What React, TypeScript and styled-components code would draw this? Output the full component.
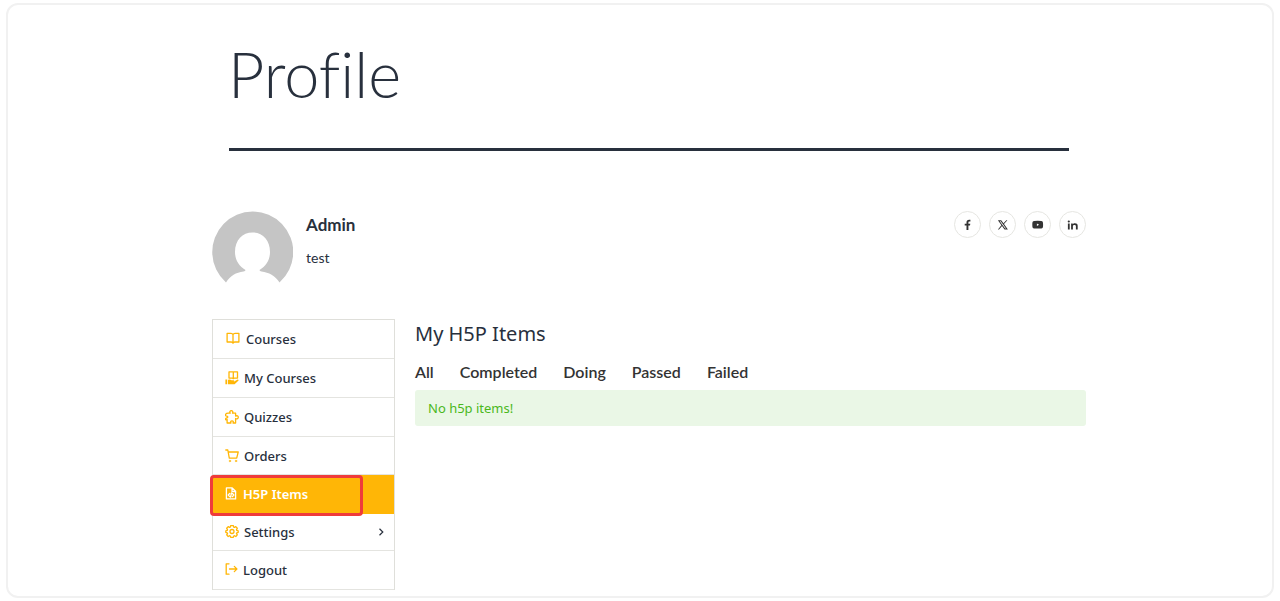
import React from "react";
import styled, { createGlobalStyle } from "styled-components";

const GlobalStyle = createGlobalStyle`
  *, *::before, *::after { box-sizing: border-box; }
  body {
    margin: 0;
    background: #fff;
    color: #28303d;
    font-family: "Noto Sans", "Open Sans", sans-serif;
  }
  h1, h2, h3, p, ul { margin: 0; padding: 0; }
  ul { list-style: none; }
  a { color: inherit; text-decoration: none; }
  button { font: inherit; color: inherit; background: none; border: 0; padding: 0; cursor: pointer; }
`;

const Frame = styled.div`
  margin: 3px 6px;
  min-height: calc(100vh - 6px);
  border: 2px solid #f1f1f1;
  border-radius: 12px;
  padding: 0 20px 6px 38px;
`;

const Container = styled.main`
  max-width: 874px;
  margin: 0 auto;
`;

const PageHeader = styled.header`
  margin: 0 17px;
  padding: 25px 0 31px;
  border-bottom: 3px solid #28303d;
`;

const PageTitle = styled.h1`
  margin-left: -1px;
  font-family: Lato, "Open Sans", sans-serif;
  font-size: 63px;
  line-height: 87px;
  font-weight: 300;
  font-variant-ligatures: none;
`;

const UserBar = styled.section`
  display: flex;
  align-items: flex-start;
  padding-top: 60px;
  height: 168px;
`;

const Avatar = styled.svg`
  width: 81px;
  height: 81px;
  flex: none;
`;

const UserInfo = styled.div`
  flex: 1;
  margin-left: 13px;
`;

const UserName = styled.h2`
  font-family: Lato, sans-serif;
  font-size: 17px;
  line-height: 28px;
  font-weight: 700;
`;

const UserBio = styled.p`
  margin-top: 8px;
  font-family: Lato, sans-serif;
  font-size: 14px;
  line-height: 22px;
`;

const Socials = styled.nav`
  display: flex;
  gap: 8px;
`;

const SocialLink = styled.a`
  display: flex;
  align-items: center;
  justify-content: center;
  width: 27px;
  height: 27px;
  border: 1px solid #e6e6e2;
  border-radius: 50%;
`;

const Columns = styled.div`
  display: flex;
  align-items: flex-start;
  gap: 20px;
`;

const Sidebar = styled.nav`
  flex: none;
  width: 183px;
  border: 1px solid #dfdfda;
  border-bottom: 0;
`;

const MenuRow = styled.li<{ $active?: boolean; $height?: number }>`
  position: relative;
  height: ${(p) => p.$height ?? 39}px;
  border-bottom: 1px solid ${(p) => (p.$active ? "#ffb606" : "#e4e4e0")};
  background: ${(p) => (p.$active ? "#ffb606" : "transparent")};
  color: ${(p) => (p.$active ? "#fff" : "#28303d")};
`;

const MenuLink = styled.a<{ $active?: boolean }>`
  display: flex;
  align-items: center;
  gap: 5px;
  height: 100%;
  padding: 0 9px 0 12px;
  font-size: 13px;
  font-weight: ${(p) => (p.$active ? 600 : 500)};

  & > svg { flex: none; color: ${(p) => (p.$active ? "#fff" : "#ffb606")}; }
  & > svg:last-child:not(:first-child) { margin-left: auto; color: #28303d; }
`;

const Highlight = styled.span`
  position: absolute;
  inset: 0 31px -3px -3px;
  border: 3px solid #ef3b3b;
  border-radius: 4px;
  pointer-events: none;
  z-index: 1;
`;

const Content = styled.section`
  flex: 1;
  min-width: 0;
`;

const ContentTitle = styled.h2`
  font-size: 20px;
  line-height: 30px;
  font-weight: 400;
`;

const Tabs = styled.div`
  display: flex;
  gap: 26px;
  margin-top: 11px;
  color: #333;
`;

const Tab = styled.button`
  && {
    font-family: Lato, "Noto Sans", sans-serif;
    font-size: 16px;
    line-height: 24px;
    font-weight: 600;
  }
`;

const Notice = styled.p`
  margin-top: 6px;
  padding: 8px 13px;
  border-radius: 3px;
  background: #eaf7e6;
  color: #4ab81c;
  font-size: 13px;
  line-height: 20px;
`;

type IconProps = { width?: number; children: React.ReactNode };

const LineIcon = ({ width = 14, children }: IconProps) => (
  <svg width={width} height="14" viewBox={`0 0 ${width} 14`} fill="none" stroke="currentColor" strokeWidth="1.3" strokeLinecap="round" strokeLinejoin="round" aria-hidden="true">
    {children}
  </svg>
);

const BookIcon = () => (
  <LineIcon width={16}>
    <path d="M8 2.500Q7.500 1.300 6 1.300H2.100v8.700h4.200q1.200 0 1.700 1.200.5-1.200 1.700-1.200h4.200V1.300H10Q8.500 1.300 8 2.500zV10.600" />
  </LineIcon>
);

const HandBookIcon = () => (
  <LineIcon>
    <path d="M4 .8h3.700l.6.5.6-.5h3.600v6.300H9l-.7.5-.7-.5H4zM8.300 1.300v6.200" />
    <path d="M.4 8.500h1.800v4.800H.4zM3 9.100c1.400-.9 2.500-.5 3.400.2h2.200c.9 0 .8 1.200 0 1.200H6.400h2.800l3-1.800c1-.5 1.900.5 1.100 1.100l-3.700 3.500H3z" fill="currentColor" stroke="none" />
  </LineIcon>
);

const PuzzleIcon = () => (
  <LineIcon>
    <path d="M3.100 3.200h2.100C4.300 1.900 5 .7 6.300.7s2 1.200 1.200 2.500h3.100v2.900c1.400-.8 2.700-.1 2.700 1.200s-1.300 2-2.700 1.200v4.500H8c.7-1.300.1-2.200-1-2.200s-1.700.9-1 2.200H2.100V9.500c-1.200.7-1.800.1-1.500-.7C1 7.600 2.800 8 2.800 6.900S1.200 6.300.7 5.600C.2 4.800.6 3.200 3.100 3.200z" />
  </LineIcon>
);

const CartIcon = () => (
  <LineIcon>
    <path d="M.8 1h2l1.500 8.100h7.400L13.200 3H3.200" />
    <circle cx="4.900" cy="12" r=".8" fill="currentColor" strokeWidth=".5" />
    <circle cx="11" cy="12" r=".8" fill="currentColor" strokeWidth=".5" />
  </LineIcon>
);

const FileCodeIcon = () => (
  <LineIcon width={13}>
    <path d="M1.400 .9h5.800l3.400 3.300v7.700H1.400zM7 1v3.500h3.500" />
    <path d="M4.700 6.500 3.200 8l1.500 1.500M7.400 6.500 8.900 8 7.400 9.500M6.500 5.900l-.9 4.200" />
  </LineIcon>
);

const GearIcon = () => (
  <LineIcon>
    <g transform="translate(0 -.5)">
      <path d="M5.700 1.100h2.600l.4 1.500.8.300 1.300-.8 1.500 1.700-.8 1.300.3.800 1.400.4v1.500l-1.400.5-.3.800.8 1.300-1.500 1.600-1.300-.8-.8.300-.4 1.400H5.700l-.4-1.400-.8-.3-1.300.8-1.500-1.600.8-1.300-.3-.8-1.400-.5V6.300l1.400-.4.300-.8-.8-1.300 1.500-1.700 1.300.8.8-.3z" />
      <circle cx="7" cy="7" r="2" />
    </g>
  </LineIcon>
);

const LogoutIcon = () => (
  <LineIcon width={13}>
    <path d="M4 .8H1.200v10.400H4M4.500 6h7.300M9.300 3.400 11.900 6 9.300 8.600" />
  </LineIcon>
);

const Chevron = () => (
  <svg width="7" height="8" viewBox="0 0 7 8" fill="none" stroke="currentColor" strokeWidth="1.2" aria-hidden="true">
    <path d="M1.500 .8 4.800 4 1.500 7.200" />
  </svg>
);

const menu = [
  { label: "Courses", icon: <BookIcon /> },
  { label: "My Courses", icon: <HandBookIcon /> },
  { label: "Quizzes", icon: <PuzzleIcon /> },
  { label: "Orders", icon: <CartIcon />, height: 38 },
  { label: "H5P Items", icon: <FileCodeIcon />, active: true },
  { label: "Settings", icon: <GearIcon />, submenu: true, height: 37 },
  { label: "Logout", icon: <LogoutIcon /> },
];

const socials = [
  { name: "Facebook", shape: <path d="M4.500 11V6.500H2.700V4.700h1.800V3.500C4.500 1.700 5.500.8 7.100.8h1.300v1.700h-1c-.7 0-1 .3-1 1v1.200h1.900L8 6.500H6.400V11z" /> },
  { name: "X", shape: <path fillRule="evenodd" d="M.9 1.200h3.300l2.300 3 2.800-3h1.100L7 5l3.900 5.500H7.500L5 7.100l-3 3.400H.9L4.400 6.300zM2.700 2.200l5.400 7.300h.9L3.700 2.200z" /> },
  { name: "YouTube", shape: <path fillRule="evenodd" d="M2.200 2Q5.700 1.700 9.200 2c1.500.1 1.900.8 1.900 3.700s-.4 3.600-1.900 3.700q-3.500.3-7 0C.7 9.300.3 8.600.3 5.700S.7 2.100 2.200 2zM4.900 4.500v2.400l2.200-1.200z" /> },
  { name: "LinkedIn", shape: <path d="M.9 4.400h1.800v6H.9zM.7 2.500a1.100 1.100 0 1 0 2.200 0 1.100 1.100 0 0 0-2.200 0M4.100 4.400h1.700v.8c.9-1.400 4.900-1.500 4.900 1.500v3.700H8.900V7.300c0-1.900-3-1.800-3 0v3.100H4.100z" /> },
];

const tabs = ["All", "Completed", "Doing", "Passed", "Failed"];

export default function App() {
  return (
    <>
      <GlobalStyle />
      <Frame>
        <Container>
          <PageHeader>
            <PageTitle>Profile</PageTitle>
          </PageHeader>
          <UserBar>
            <Avatar viewBox="0 0 81 81" role="img" aria-label="Admin avatar">
              <path
                fill="#c5c5c5"
                d="M14 71.500A40.500 40.500 0 1 1 67.500 71.500C63 64.500 57 61.500 49.500 60.500Q47.500 60 47.500 59C54 55 58 49 58 41C58 29 50.500 21.500 40.500 21.500S23 29 23 41C23 49 27 55 33.500 59Q33.500 60 31.500 60.500C24 61.500 18.500 64.500 14 71.500z"
              />
            </Avatar>
            <UserInfo>
              <UserName>Admin</UserName>
              <UserBio>test</UserBio>
            </UserInfo>
            <Socials aria-label="Social profiles">
              {socials.map((s) => (
                <SocialLink key={s.name} href="#" aria-label={s.name}>
                  <svg width="12" height="12" viewBox="0 0 12 12" fill="#333" aria-hidden="true">{s.shape}</svg>
                </SocialLink>
              ))}
            </Socials>
          </UserBar>
          <Columns>
            <Sidebar aria-label="Profile menu">
              <ul>
                {menu.map((m) => (
                  <MenuRow key={m.label} $active={m.active} $height={m.height}>
                    <MenuLink href="#" $active={m.active}>
                      {m.icon}
                      <span>{m.label}</span>
                      {m.submenu && <Chevron />}
                    </MenuLink>
                    {m.active && <Highlight />}
                  </MenuRow>
                ))}
              </ul>
            </Sidebar>
            <Content>
              <ContentTitle>My H5P Items</ContentTitle>
              <Tabs>
                {tabs.map((t) => (
                  <Tab key={t} type="button">{t}</Tab>
                ))}
              </Tabs>
              <Notice>No h5p items!</Notice>
            </Content>
          </Columns>
        </Container>
      </Frame>
    </>
  );
}
